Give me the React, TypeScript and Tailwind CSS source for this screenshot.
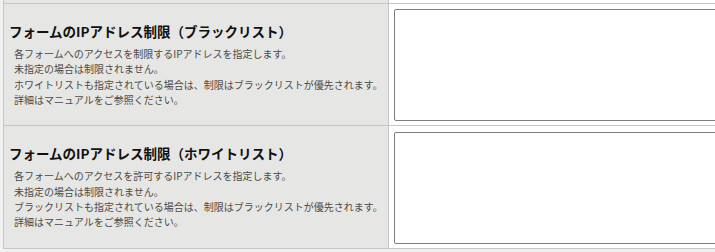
import React from 'react';

interface IpRuleRowProps {
  title: string;
  lines: string[];
  padTop?: string;
}

const IpRuleRow: React.FC<IpRuleRowProps> = ({ title, lines, padTop = 'pt-[5px]' }) => {
  return (
    <div className="flex border-b border-[#c6c6c6]">
      <div className="w-[385px] shrink-0 bg-[#e6e7e4] pl-[5px] flex flex-col justify-center border-r border-[#c6c6c6]">
        <h3 className="text-[13.5px] leading-[18px] font-bold text-[#111] whitespace-nowrap">{title}</h3>
        <div className="mt-[6px] pl-[5px] text-[10px] leading-[15.4px] text-[#4a4a4a] whitespace-nowrap">
          {lines.map((line) => (
            <p key={line}>{line}</p>
          ))}
        </div>
      </div>
      <div className={`flex-1 bg-white pl-[5px] pb-[4px] ${padTop}`}>
        <textarea className="block w-[420px] h-[112px] border border-[#7d7d7d] rounded-[2px] resize-none outline-none bg-white" />
      </div>
    </div>
  );
};

export default function App() {
  return (
    <div
      className="h-[252px] w-[715px] overflow-hidden bg-[#f1f1f1] pl-[3px]"
      style={{ fontFamily: '"Noto Sans CJK JP", "Noto Sans", sans-serif' }}
    >
      <div className="w-[840px] border-l border-[#c6c6c6]">
        <div className="flex h-[4px] border-b border-[#c6c6c6]">
          <div className="w-[385px] shrink-0 bg-[#e6e7e4] border-r border-[#c6c6c6]" />
          <div className="flex-1 bg-white" />
        </div>
        <IpRuleRow
          title="フォームのIPアドレス制限（ブラックリスト）"
          lines={[
            '各フォームへのアクセスを制限するIPアドレスを指定します。',
            '未指定の場合は制限されません。',
            'ホワイトリストも指定されている場合は、制限はブラックリストが優先されます。',
            '詳細はマニュアルをご参照ください。',
          ]}
        />
        <IpRuleRow
          padTop="pt-[6px]"
          title="フォームのIPアドレス制限（ホワイトリスト）"
          lines={[
            '各フォームへのアクセスを許可するIPアドレスを指定します。',
            '未指定の場合は制限されません。',
            'ブラックリストも指定されている場合は、制限はブラックリストが優先されます。',
            '詳細はマニュアルをご参照ください。',
          ]}
        />
      </div>
    </div>
  );
}
